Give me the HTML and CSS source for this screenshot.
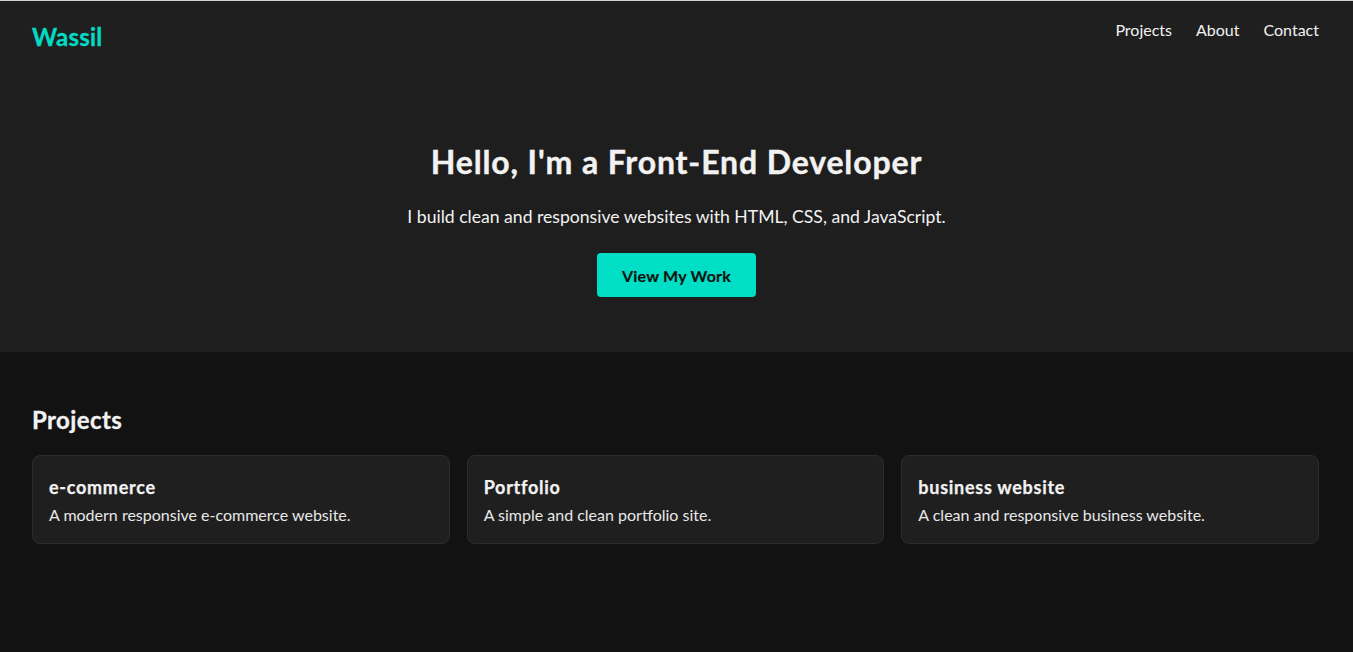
FILE: index.html
```html
<!DOCTYPE html>
<html lang="en">
<head>
<meta charset="utf-8">
<title>Wassil</title>
<link rel="stylesheet" href="styles.css">
</head>
<body>
<header class="site-header">
  <div class="logo">Wassil</div>
  <nav class="nav">
    <a href="#projects">Projects</a>
    <a href="#about">About</a>
    <a href="#contact">Contact</a>
  </nav>
</header>
<section class="hero">
  <h1 class="hero-title">Hello, I'm a Front-End Developer</h1>
  <p class="hero-text">I build clean and responsive websites with HTML, CSS, and JavaScript.</p>
  <a class="btn" href="#projects">View My Work</a>
</section>
<section class="section" id="projects">
  <h2 class="section-title">Projects</h2>
  <div class="cards">
    <div class="card">
      <h3 class="card-title">e-commerce</h3>
      <p class="card-text">A modern responsive e-commerce website.</p>
    </div>
    <div class="card">
      <h3 class="card-title">Portfolio</h3>
      <p class="card-text">A simple and clean portfolio site.</p>
    </div>
    <div class="card">
      <h3 class="card-title">business website</h3>
      <p class="card-text">A clean and responsive business website.</p>
    </div>
  </div>
</section>
<section class="section" id="about">
  <h2 class="section-title">About</h2>
  <p class="card-text">I'm a front-end developer who loves building clean, fast and accessible websites.</p>
</section>
</body>
</html>
```
FILE: styles.css
```css
* { box-sizing: border-box; }
html, body { margin: 0; padding: 0; }
body {
  background: #121212;
  color: #f2f2f2;
  font-family: "Lato", "Noto Sans", sans-serif;
  border-top: 1px solid #d4d4d4;
}
.site-header {
  background: #1f1f1f;
  height: 69px;
  padding: 0 34px 0 32px;
  display: flex;
  justify-content: space-between;
  align-items: flex-start;
}
.logo {
  color: #00dcc4;
  font-size: 24px;
  font-weight: 700;
  line-height: 32px;
  margin-top: 20px;
  letter-spacing: 0.01em;
  -webkit-text-stroke: 0.3px currentColor;
}
.nav {
  display: flex;
  gap: 24px;
  margin-top: 17px;
}
.nav a {
  color: #f2f2f2;
  text-decoration: none;
  font-size: 16px;
  line-height: 24px;
}
.hero {
  background: #1e1e1e;
  text-align: center;
  padding: 72px 32px 55px;
  display: flex;
  flex-direction: column;
  align-items: center;
}
.hero-title {
  margin: 0;
  font-size: 32px;
  line-height: 40px;
  font-weight: 700;
  letter-spacing: 0.027em;
  -webkit-text-stroke: 0.4px currentColor;
}
.hero-text {
  margin: 23px 0 24px;
  font-size: 17.6px;
  line-height: 24px;
}
.btn {
  display: inline-flex;
  align-items: center;
  justify-content: center;
  width: 159px;
  height: 44px;
  background: #00dfc5;
  color: #121212;
  font-weight: 700;
  font-size: 16px;
  letter-spacing: 0.015em;
  text-decoration: none;
  border-radius: 4px;
  -webkit-text-stroke: 0.2px currentColor;
}
.section {
  padding: 52px 34px 52px 32px;
}
.section-title {
  margin: 0 0 19px;
  font-size: 24px;
  line-height: 32px;
  font-weight: 700;
  letter-spacing: 0.017em;
  -webkit-text-stroke: 0.3px currentColor;
}
.cards {
  display: grid;
  grid-template-columns: repeat(3, 1fr);
  gap: 17px;
}
.card {
  background: #1f1f1f;
  border: 1px solid #2c2c2c;
  border-radius: 8px;
  padding: 19px 16px 16px;
}
.card-title {
  margin: 0 0 4px;
  font-size: 18px;
  line-height: 24px;
  font-weight: 700;
  letter-spacing: 0.04em;
  -webkit-text-stroke: 0.25px currentColor;
}
.card-text {
  margin: 0;
  font-size: 16px;
  line-height: 24px;
  color: #e8e8e8;
}
```
